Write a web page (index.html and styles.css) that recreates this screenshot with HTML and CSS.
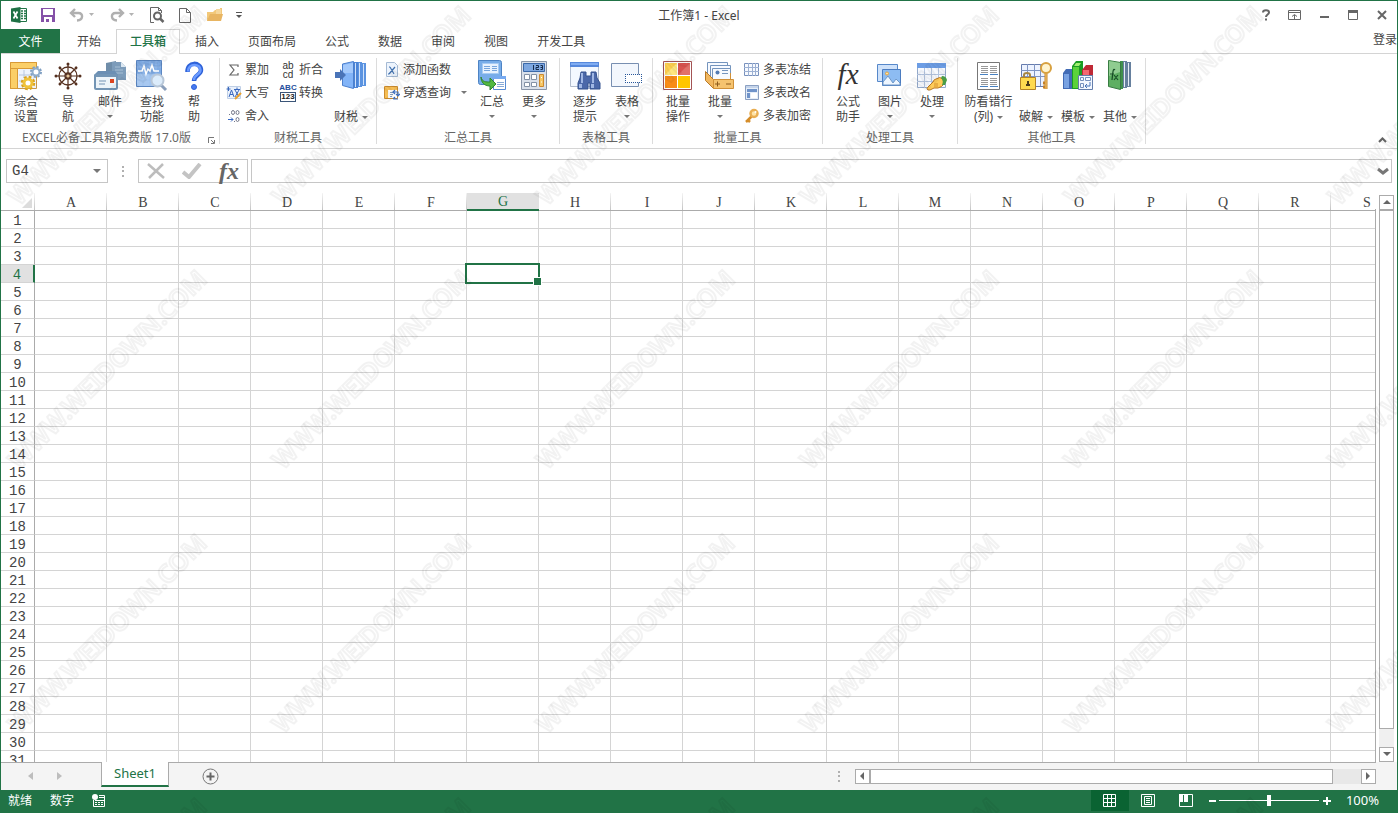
FILE: index.html
```html
<!DOCTYPE html>
<html lang="zh-CN">
<head>
<meta charset="utf-8">
<title>工作簿1 - Excel</title>
<link rel="stylesheet" href="styles.css">
</head>
<body>
<div class="app">
  <header class="titlebar">
    <div class="quick">
      <svg class="logo" width="18" height="16" viewBox="0 0 18 16"><path d="M8 1.500h7.500v13H8z" fill="#fff" stroke="#217346"/><path d="M10 4h2M13 4h2M10 6.500h2M13 6.500h2M10 9h2M13 9h2M10 11.500h2M13 11.500h2" stroke="#217346" stroke-width="1.500"/><path d="M0 1.500 9.500 0v16L0 14.500z" fill="#1e7145"/><path d="M2.500 4.500l4 7M6.500 4.500l-4 7" stroke="#fff" stroke-width="1.700"/></svg>
      <button class="qbtn save" aria-label="保存"><svg width="14" height="14" viewBox="0 0 14 14"><path d="M0 0h14v14H0z" fill="#8551a8"/><path d="M2 1h10v6H2zM3 9h8v5H3z" fill="#fff"/><path d="M5 11h3v3H5z" fill="#8551a8"/></svg></button>
      <button class="qbtn undo" aria-label="撤消"><svg width="26" height="14" viewBox="0 0 26 14"><path d="M6 1 2 5l4 4M2 5h7.500c5 0 5 7-1.500 7.500" fill="none" stroke="#b0b0b0" stroke-width="2.400"/><path d="M20 5h5l-2.500 3z" fill="#b3b3b3"/></svg></button>
      <button class="qbtn redo" aria-label="恢复"><svg width="26" height="14" viewBox="0 0 26 14"><path d="M10 1l4 4-4 4M14 5H6.500c-5 0-5 7 1.500 7.500" fill="none" stroke="#b0b0b0" stroke-width="2.400"/><path d="M20 5h5l-2.500 3z" fill="#b3b3b3"/></svg></button>
      <button class="qbtn preview" aria-label="打印预览"><svg width="15" height="16" viewBox="0 0 15 16"><path d="M4 15.500H.500V.500h8l3 3V6M8.500.500v3h3" fill="none" stroke="#666"/><circle cx="7.500" cy="9" r="3.500" fill="#fff" stroke="#666" stroke-width="2"/><path d="M10 11.500 13.500 15" stroke="#666" stroke-width="2.500"/></svg></button>
      <button class="qbtn new" aria-label="新建"><svg width="12" height="15" viewBox="0 0 12 15"><path d="M.500.500h7l4 4v10H.500zM7.500.500v4h4" fill="none" stroke="#666"/></svg></button>
      <button class="qbtn open" aria-label="打开"><svg width="17" height="14" viewBox="0 0 17 14"><path d="M0 13V4h6l2-2h5V0h2v8" fill="#f2c879"/><path d="M9 1h5v5H9z" fill="#f6d79b"/><path d="M3 6h13l-2 7H0z" fill="#e8b562"/></svg></button>
      <button class="qbtn more" aria-label="自定义快速访问工具栏"><svg width="6" height="7" viewBox="0 0 6 7"><path d="M0 .500h6" stroke="#555"/><path d="M0 3h6L3 6z" fill="#555"/></svg></button>
    </div>
    <h1 class="doc">工作簿1 - Excel</h1>
    <div class="winctl">
      <button aria-label="帮助"><svg width="12" height="12" viewBox="0 0 12 12"><path d="M3 3.500C3 .500 9 .500 9 3.500 9 5.500 6 5.500 6 8M6 9.500v2" fill="none" stroke="#666" stroke-width="2"/></svg></button>
      <button aria-label="功能区显示选项"><svg width="13" height="10" viewBox="0 0 13 10"><path d="M.500.500h12v9H.500zM0 2.500h13M6.500 9V5M4 6.500 6.500 4.500 9 6.500" fill="none" stroke="#666"/></svg></button>
      <button aria-label="最小化"><svg width="10" height="10" viewBox="0 0 10 10"><path d="M1 7h9" stroke="#666" stroke-width="2"/></svg></button>
      <button aria-label="最大化"><svg width="10" height="10" viewBox="0 0 10 10"><path d="M.500.500h9v9H.500z" fill="none" stroke="#666"/><path d="M0 1.500h10" stroke="#666" stroke-width="3"/></svg></button>
      <button aria-label="关闭"><svg width="10" height="10" viewBox="0 0 10 10"><path d="M1 1l8 8M9 1 1 9" stroke="#666" stroke-width="2"/></svg></button>
    </div>
  </header>

  <nav class="tabs">
    <button class="tab file">文件</button>
    <button class="tab">开始</button>
    <button class="tab active">工具箱</button>
    <button class="tab">插入</button>
    <button class="tab">页面布局</button>
    <button class="tab">公式</button>
    <button class="tab">数据</button>
    <button class="tab">审阅</button>
    <button class="tab">视图</button>
    <button class="tab">开发工具</button>
    <button class="login">登录</button>
  </nav>

  <section class="ribbon">
    <div class="group">
      <div class="tools">
        <button class="big"><svg width="32" height="32" viewBox="0 0 32 32"><path d="M.500 2.500h26v26H.500z" fill="#eef3fb" stroke="#c7974a"/><path d="M1 3h26v6H1zM1 9h6v20H1z" fill="#fbcf68"/><path d="M.500 2.500h26v6h-19v20h-7zM.500 8.500h7" fill="none" stroke="#d99a35"/><path d="M9 15h15M9 21h5M14 10v8" stroke="#b9c7de"/><circle cx="26" cy="12" r="5" fill="none" stroke="#7f9fc2" stroke-width="2" stroke-dasharray="2.200 1.700"/><circle cx="26" cy="12" r="3.500" fill="#fff" stroke="#8fadcb" stroke-width="2"/><circle cx="18" cy="23" r="6" fill="none" stroke="#d9a21c" stroke-width="2.500" stroke-dasharray="2.700 2"/><circle cx="18" cy="23" r="4" fill="#fff" stroke="#efc23a" stroke-width="3"/></svg><span>综合<br>设置</span></button>
        <button class="big"><svg width="32" height="32" viewBox="0 0 32 32"><g fill="none" stroke="#55301f"><circle cx="16" cy="16" r="9" stroke-width="1.300"/><circle cx="16" cy="16" r="3" stroke-width="1.300"/><path d="M16 3v26M3 16h26M7 7l18 18M25 7 7 25" stroke-width="1.200"/></g><g fill="#55301f"><circle cx="16" cy="4" r="1.500"/><circle cx="16" cy="28" r="1.500"/><circle cx="4" cy="16" r="1.500"/><circle cx="28" cy="16" r="1.500"/><circle cx="8" cy="8" r="1.400"/><circle cx="24" cy="8" r="1.400"/><circle cx="8" cy="24" r="1.400"/><circle cx="24" cy="24" r="1.400"/></g><circle cx="16" cy="16" r="1.500" fill="#e8c69a"/></svg><span>导<br>航</span></button>
        <button class="big"><svg width="32" height="32" viewBox="0 0 32 32"><path d="M12 3l10-2v13H12z" fill="#6f8da9"/><path d="M18 2h9l5 5v13H18z" fill="#7d9cba"/><path d="M27 2v5h5" fill="#dce8f2"/><path d="M21 7h5M21 10h8M21 13h8" stroke="#a9c0d5"/><path d="M4 11h17l3 4v4H0v-4z" fill="#6b8fb4"/><path d="M0 16q0-2 2-2h20q2 0 2 2v12q0 2-2 2H2q-2 0-2-2z" fill="#7395b5"/><path d="M2 17h20v11H2z" fill="#edf4f9"/><path d="M5 21h7M5 24h6" stroke="#9ab3ca" stroke-width="1.500"/><path d="M16 19h4v4h-4z" fill="#dd4520"/></svg><span>邮件</span><i class="caret"></i></button>
        <button class="big"><svg width="32" height="32" viewBox="0 0 32 32"><path d="M.500.500h25v26H.500z" fill="#7eaae3" stroke="#5c87c2"/><path d="M1 14h24v12H1z" fill="#a8c8f0"/><path d="M1 7h24M1 14h24M1 20h24M7 1v25M14 1v25M20 1v25" stroke="#9cc0ee" stroke-width=".700"/><path d="M2 11h4l2-5 2 8 2-5 2 2 2-6 2 6h5" fill="none" stroke="#fff" stroke-width="1.500"/><path d="m25 25 5 5" stroke="#8b9fbb" stroke-width="3"/><circle cx="21.500" cy="20.500" r="6" fill="#dcecfb" stroke="#b8c7d8" stroke-width="2"/></svg><span>查找<br>功能</span></button>
        <button class="big"><svg width="32" height="32" viewBox="0 0 32 32"><path d="M9.500 12C9 1 23 2 23 10c0 5-7 5-7 11" fill="none" stroke="#2e62d9" stroke-width="4.500"/><path d="M10 11.500C10 2.500 23 3.500 22.500 10c0 5-6.500 4-6.500 10" fill="none" stroke="#6b9bff" stroke-width="2.500"/><circle cx="16" cy="27" r="2.500" fill="#477af0" stroke="#2e62d9"/></svg><span>帮<br>助</span></button>
      </div>
      <div class="caption"><span>EXCEL必备工具箱免费版 17.0版</span><button class="launcher" aria-label="更多设置"><svg width="7" height="7" viewBox="0 0 7 7"><path d="M.500 6V.500H6M3 3l3 3M6.500 3v3.500H3" fill="none" stroke="#777"/></svg></button></div>
    </div>

    <div class="group">
      <div class="tools">
        <div class="stack">
          <button class="small"><svg width="16" height="16" viewBox="0 0 16 16"><path d="M12 5V3H4l4 5-4 5h8v-2" fill="none" stroke="#666" stroke-width="1.200"/></svg>累加</button>
          <button class="small"><svg width="16" height="16" viewBox="0 0 16 16"><path d="M1.500 1.500h13v12h-13z" fill="#eaf1fc" stroke="#c0d0e6"/><path d="M2.500 2v4M.500 4h4M3 12l2.500-7L8 12M4 9.500h3M8 4.500h6M11 2.500v2M9 5l4 7M13 5l-4 7" fill="none" stroke="#3a68bd"/><path d="m9 14 6-6" stroke="#eaa12c" stroke-width="2"/></svg>大写</button>
          <button class="small"><svg width="16" height="16" viewBox="0 0 16 16"><g fill="none" stroke="#75788a"><ellipse cx="7" cy="4.500" rx="1.500" ry="2"/><ellipse cx="11.500" cy="4.500" rx="1.500" ry="2"/><ellipse cx="11.500" cy="11.500" rx="1.500" ry="2"/><path d="M3 6.500h1M8 13.500h1"/></g><path d="M2 11.500h5M5 9.500l2 2-2 2" fill="none" stroke="#3768c4"/></svg>舍入</button>
        </div>
        <div class="stack second">
          <button class="small"><span class="letters"><b>ab</b><b>cd</b></span>折合</button>
          <button class="small"><span class="digits"><b>ABC</b><b class="num">123</b></span>转换</button>
        </div>
        <button class="big drop"><svg width="32" height="32" viewBox="0 0 32 32"><path d="M27 3h4v23h-4z" fill="#5b93e0"/><path d="M28 4h1v21h-1z" fill="#cfe2fb"/><path d="M23 2h4v25h-4z" fill="#5b93e0"/><path d="M24 3h1v23h-1z" fill="#cfe2fb"/><path d="M19 2h4v26h-4z" fill="#4b84d6"/><path d="M20 3h1v24h-1z" fill="#cfe2fb"/><path d="M7.500 4l11-2.500v27l-11-3z" fill="#82b4f8" stroke="#4c80ce"/><path d="M8 5l10-2v10H8z" fill="#a3c9fc"/><path d="M0 12h5V9l6 6-6 6v-3H0z" fill="#4a74b8"/></svg><span>财税<i class="caret"></i></span></button>
      </div>
      <div class="caption"><span>财税工具</span></div>
    </div>

    <div class="group">
      <div class="tools">
        <div class="stack wide">
          <button class="small"><svg width="16" height="16" viewBox="0 0 16 16"><path d="M2.500.500h8l3 3v11h-11z" fill="#edf4fd" stroke="#a5bad4"/><path d="m6 5 4 7M11 5l-6 7M4 12h1M5 5h1" stroke="#4272af" stroke-width="1.200"/></svg>添加函数</button>
          <button class="small"><svg width="16" height="16" viewBox="0 0 16 16"><path d="M.500 1.500h13v12H.500z" fill="#fff" stroke="#cc8c2f"/><path d="M1 2h12v3H1zM1 5h3v8H1z" fill="#f6bd53"/><path d="M6 7.500h4M6 9.500h3M6 11.500h2" stroke="#88a0c0"/><path d="M9 7h5v4M14 14H9M11 5 9 7l2 2M12 9l2 2 2-2M11 12l-2 2" fill="none" stroke="#3d6fbf" stroke-width="1.200"/></svg>穿透查询<i class="caret"></i></button>
        </div>
        <button class="big"><svg width="32" height="32" viewBox="0 0 32 32"><path d="M2.500.500h21q2 0 2 2v22h-21q-2 0-2-2z" fill="#78ade9" stroke="#4d83c4"/><path d="M6.500 3.500h16v10h-16z" fill="#e8f2fe" stroke="#a7caf3"/><path d="M8 6.500h6M16 6.500h5M8 8.500h6M16 8.500h5M8 10.500h6M16 10.500h5" stroke="#77a5dd"/><path d="M17.500 16.500h12v13h-12z" fill="#fff" stroke="#588cd3"/><path d="M17 16h13v3H17z" fill="#77aaf0"/><path d="M21 22.500h7M21 24.500h7M21 26.500h7" stroke="#88aad7"/><path d="M5 17c1 5 5 5 9 5v-4l6 6-6 6v-4C8 26 5 22 5 17z" fill="#52b842" stroke="#2f862d"/></svg><span>汇总</span><i class="caret"></i></button>
        <button class="big"><svg width="32" height="32" viewBox="0 0 32 32"><path d="M3.500 1.500h25v28h-25z" fill="#d9e0ea" stroke="#8995a8"/><path d="M5.500 3.500h21v8h-21z" fill="#7da7e0" stroke="#3b69a9"/><path d="M15.500 5v5M18 5.500h2.500v2H18v2h3M22.500 5.500h2v4h-2M22.500 7.500h2" fill="none" stroke="#162b4b"/><g fill="#fff" stroke="#8391a5"><path d="M6.500 14.500h5v5h-5zM13.500 14.500h5v5h-5zM6.500 22.500h5v4h-5zM13.500 22.500h5v4h-5z"/></g><path d="M21.500 14.500h4v12h-4z" fill="#f6c766" stroke="#cc8930"/><path d="M23 17.500h1M23 22h1" stroke="#fff"/></svg><span>更多</span><i class="caret"></i></button>
      </div>
      <div class="caption"><span>汇总工具</span></div>
    </div>

    <div class="group">
      <div class="tools">
        <button class="big"><svg width="32" height="32" viewBox="0 0 32 32"><path d="M1.500 2.500h28v24h-28z" fill="#f3f8ff" stroke="#b2bdce"/><path d="M1 2h29v5H1z" fill="#5688dc"/><path d="M2 3h27v2H2z" fill="#7facf2"/><path d="M12 12h5v4h5v-4h5l1 6 3 5v6H21v-6h-2v6H9v-6l2-5z" fill="#4b68a9" stroke="#35528f"/><path d="M12 13h2v10h-2zM23 13h2v10h-2zM10 24h3v4h-3zM22 24h3v4h-3z" fill="#a0b7e4"/></svg><span>逐步<br>提示</span></button>
        <button class="big"><svg width="32" height="32" viewBox="0 0 32 32"><path d="M.500 3.500h27v23H.500z" fill="#f3f7fd" stroke="#788fb1"/><path d="M14.500 14.500h16v8h-16z" fill="#fff"/><path d="M14 14.500h17M14 22.500h17M14.500 14v9M30.500 14v9" stroke="#27569a" stroke-dasharray="1 1"/></svg><span>表格</span><i class="caret"></i></button>
      </div>
      <div class="caption"><span>表格工具</span></div>
    </div>

    <div class="group">
      <div class="tools">
        <button class="big"><svg width="32" height="32" viewBox="0 0 32 32"><path d="M1.500 1.500h28v28h-28z" fill="#fff" stroke="#a35353"/><path d="M3 3h12v12H3z" fill="#ffd050"/><path d="M3 15 15 3v12z" fill="#ffe67e"/><path d="M16 3h12v12H16z" fill="#d9534f"/><path d="M16 15 28 3v12z" fill="#e2716a"/><path d="M3 16h12v12H3z" fill="#f98b16"/><path d="M16 16h12v12H16z" fill="#ffc600"/></svg><span>批量<br>操作</span></button>
        <button class="big"><svg width="32" height="32" viewBox="0 0 32 32"><g fill="#f7faff" stroke="#7494bd"><path d="M3.500 2.500h20v13h-20z"/><path d="M6.500 5.500h20v13h-20z"/><path d="M8.500 8.500h18v13h-18z"/></g><circle cx="13.500" cy="12.500" r="2" fill="#527bb4"/><path d="M18 10.500h6M18 13.500h6" stroke="#7595bf"/><path d="M1.500 11.500l8 8v9l-8-8z" fill="#f2b860" stroke="#b77927"/><path d="M9.500 19.500h20v9h-20zM26.500 13v6" fill="#f5c36f" stroke="#d09038"/><path d="M11 24h5M13.500 21.500v5M22 24h5" stroke="#8c5a1c"/></svg><span>批量</span><i class="caret"></i></button>
        <div class="stack tables">
          <button class="small"><svg width="16" height="16" viewBox="0 0 16 16"><path d="M.500 1.500h14v12H.500z" fill="#f7faff" stroke="#7891bd"/><path d="M4.500 1v13M8.500 1v13M11.500 1v13M0 5.500h15M0 9.500h15" stroke="#9db1d3"/></svg>多表冻结</button>
          <button class="small"><svg width="16" height="16" viewBox="0 0 16 16"><path d="M1.500.500h13v14h-13z" fill="#e5edf7" stroke="#8ba0c2"/><path d="M2 1h12v2H2z" fill="#c5d4ea"/><path d="M3 4h10v3H3zM3 8h3v5H3z" fill="#6f93c9"/><path d="M7 8h6v5H7z" fill="#fff"/></svg>多表改名</button>
          <button class="small"><svg width="16" height="16" viewBox="0 0 16 16"><path d="M8 8 2 14M4 12l2 2" stroke="#d58d29" stroke-width="2.500"/><circle cx="10" cy="5.500" r="3.500" fill="#ffe4a8" stroke="#e9ae52" stroke-width="2.500"/><circle cx="11.500" cy="4" r="1" fill="#fff"/></svg>多表加密</button>
        </div>
      </div>
      <div class="caption"><span>批量工具</span></div>
    </div>

    <div class="group">
      <div class="tools">
        <button class="big"><em class="fx">fx</em><span>公式<br>助手</span></button>
        <button class="big"><svg width="32" height="32" viewBox="0 0 32 32"><path d="M3.500 4.500h20v17h-20z" fill="#cfe2fa" stroke="#5688ca"/><path d="M8.500 9.500h18v16h-18z" fill="#8dbcf2" stroke="#4b7cc0"/><path d="M9 22l5-6 5 7 3-4 4 4v2H9z" fill="#eef6ff" stroke="#7098c7"/><circle cx="13" cy="13.500" r="1.500" fill="#ffe1a0" stroke="#e7a643"/></svg><span>图片</span><i class="caret"></i></button>
        <button class="big"><svg width="32" height="32" viewBox="0 0 32 32"><path d="M1.500 3.500h28v24h-28z" fill="#f6f9ff" stroke="#93a9ca"/><path d="M1 3h29v5H1z" fill="#6c9de5"/><path d="M8.500 8v20M15.500 8v20M22.500 8v20M1 14.500h28M1 21.500h28" stroke="#b3c4df"/><path d="M12 30q-2-1 0-3l5-5q1-3 3-3 4-3 7 0l1 5q-2 3-6 4h-4l-4 2z" fill="#ffcb59" stroke="#b97724"/><path d="M18 24h4M18 26h4" stroke="#d4922f"/><path d="M26 16q4 0 5 4l-2 5h-3q2-4-1-7z" fill="#4a9d45"/></svg><span>处理</span><i class="caret"></i></button>
      </div>
      <div class="caption"><span>处理工具</span></div>
    </div>

    <div class="group">
      <div class="tools">
        <button class="big broad"><svg width="32" height="32" viewBox="0 0 32 32"><path d="M4.500 2.500h22v27h-22z" fill="#fff" stroke="#777"/><path d="M8 6.500h7M17 6.500h7M8 8.500h7M17 8.500h7M8 10.500h7M17 10.500h7M8 12.500h7M17 12.500h7M8 18.500h7M17 18.500h7M8 20.500h7M17 20.500h7M8 22.500h7M17 22.500h7M8 24.500h7M17 24.500h7" stroke="#999"/><path d="M7 14.500h8M17 14.500h8M7 26.500h8M17 26.500h8" stroke="#4982c2"/></svg><span>防看错行<br>(列)<i class="caret"></i></span></button>
        <button class="big drop"><svg width="32" height="32" viewBox="0 0 32 32"><path d="M1.500 4.500h25v22h-25z" fill="#edf3ff" stroke="#667cae"/><path d="M7.500 4v22M14.500 4v22M20.500 4v22M1 10.500h25M1 16.500h25" stroke="#8095c2"/><path d="M26 13v16M27 23h-4M27 27h-4" stroke="#c68128" stroke-width="3"/><path d="M26 12v17" stroke="#f9cf75"/><circle cx="26" cy="8" r="5" fill="#fff4cf" stroke="#d8a140" stroke-width="2"/><path d="M4 19v-4q0-2 3-2t3 2v4" fill="none" stroke="#a78643" stroke-width="2"/><path d="M.500 17.500h15v12H.500z" fill="#ffda4f" stroke="#b58425"/><path d="M8 21v5M6 25h4" stroke="#4b3b1b" stroke-width="2"/></svg><span>破解<i class="caret"></i></span></button>
        <button class="big drop"><svg width="32" height="32" viewBox="0 0 32 32"><path d="M1 13l3-4h6v20H1z" fill="#426bb5"/><path d="M2 14h5v14H2z" fill="#79a2e2"/><path d="M10 6l4-5h7v28H10z" fill="#1b9c25"/><path d="M11 7h6v21h-6z" fill="#5bd23b"/><path d="M14 3h5l-2 3h-5z" fill="#a1ef70"/><path d="M20 10l4-5h7v23H20z" fill="#bf2936"/><path d="M21 10h6v17h-6z" fill="#f36770"/><path d="M16.500 15.500h14v14h-14z" fill="#f4f8ff" stroke="#647eac"/><path d="M18.500 17.500h3v3h-3zM23.500 17.500h5v3h-5zM18.500 23.500h3v4h-3z" fill="none" stroke="#7690bc"/><path d="M28 22v4h-5M25 24l-2 2 2 2" fill="none" stroke="#4672b6"/></svg><span>模板<i class="caret"></i></span></button>
        <button class="big drop"><svg width="32" height="32" viewBox="0 0 32 32"><path d="M23 2h4v25h-4z" fill="#66809e"/><path d="M24 3h1v23h-1z" fill="#e6edf5"/><path d="M19 1h4v27h-4z" fill="#66809e"/><path d="M20 2h1v25h-1z" fill="#e6edf5"/><path d="M16 1h3v28h-3z" fill="#3f8f4c"/><path d="M4.500.500l12 2v27l-12-3z" fill="#5eaf62" stroke="#387c42"/><path d="M5 1l11 2v9L5 16z" fill="#8fcc90"/><path d="M11 10c-2-2-2 1-3 10M6 14h4M10 15l4 5M14 15l-4 5" fill="none" stroke="#164c25" stroke-width="1.200"/></svg><span>其他<i class="caret"></i></span></button>
      </div>
      <div class="caption"><span>其他工具</span></div>
    </div>
    <button class="collapse" aria-label="折叠功能区"><svg width="9" height="6" viewBox="0 0 9 6"><path d="M1 5l3.500-3.500L8 5" fill="none" stroke="#666" stroke-width="2"/></svg></button>
  </section>

  <section class="formula">
    <div class="namebox"><input aria-label="名称框" value="G4"><button aria-label="选择名称"><svg width="8" height="5" viewBox="0 0 8 5"><path d="M0 0h8L4 4z" fill="#777"/></svg></button></div>
    <svg class="grip" width="2" height="11" viewBox="0 0 2 11"><path d="M0 0h2v2H0zM0 4h2v2H0zM0 9h2v2H0z" fill="#b0b0b0"/></svg>
    <div class="fbuttons">
      <button aria-label="取消"><svg width="18" height="16" viewBox="0 0 18 16"><path d="M1 1l16 14M16 1 2 15" stroke="#bdbdbd" stroke-width="2.500"/></svg></button>
      <button aria-label="输入"><svg width="20" height="16" viewBox="0 0 20 16"><path d="M1 9l6 5L18 1" fill="none" stroke="#c4c4c4" stroke-width="4"/></svg></button>
      <button class="insertfx" aria-label="插入函数"><em>fx</em></button>
    </div>
    <div class="fbar"><input aria-label="编辑栏"><button aria-label="展开编辑栏"><svg width="12" height="9" viewBox="0 0 12 9"><path d="M1 2l5 4 5-4" fill="none" stroke="#777" stroke-width="3"/></svg></button></div>
  </section>

  <main class="work">
    <div class="sheet" id="sheet"></div>
    <div class="vscroll">
      <button aria-label="向上滚动"><svg width="8" height="5" viewBox="0 0 8 5"><path d="M0 4h8L4 0z" fill="#666"/></svg></button>
      <div class="vthumb"></div>
      <div class="vtrack"></div>
      <button aria-label="向下滚动"><svg width="8" height="5" viewBox="0 0 8 5"><path d="M0 0h8L4 4z" fill="#666"/></svg></button>
    </div>
  </main>

  <div class="sheetbar">
    <button class="nav" aria-label="上一个"><svg width="5" height="8" viewBox="0 0 5 8"><path d="M5 0v8L0 4z" fill="#bdbdbd"/></svg></button>
    <button class="nav" aria-label="下一个"><svg width="5" height="8" viewBox="0 0 5 8"><path d="M0 0v8l5-4z" fill="#bdbdbd"/></svg></button>
    <button class="sheettab">Sheet1</button>
    <button class="add" aria-label="新工作表"><svg width="17" height="17" viewBox="0 0 17 17"><circle cx="8.500" cy="8.500" r="7.500" fill="none" stroke="#777"/><path d="M8.500 4.500v8M4.500 8.500h8" stroke="#666" stroke-width="2"/></svg></button>
    <svg class="grip push" width="2" height="11" viewBox="0 0 2 11"><path d="M0 0h2v2H0zM0 4h2v2H0zM0 9h2v2H0z" fill="#b0b0b0"/></svg>
    <div class="hscroll">
      <button aria-label="向左滚动"><svg width="5" height="8" viewBox="0 0 5 8"><path d="M4 0v8L0 4z" fill="#666"/></svg></button>
      <div class="hthumb"></div>
      <div class="htrack"></div>
      <button aria-label="向右滚动"><svg width="5" height="8" viewBox="0 0 5 8"><path d="M0 0v8l4-4z" fill="#666"/></svg></button>
    </div>
  </div>

  <footer class="status">
    <span>就绪</span><span>数字</span>
    <svg class="macro" width="13" height="13" viewBox="0 0 13 13"><path d="M1.500 6v6.500h11v-11H7" fill="none" stroke="#fff"/><circle cx="3" cy="3" r="3" fill="#fff"/><path d="M7 3.500h5M3 6.500h9" stroke="#fff"/><path d="M3 8.500h2M6 8.500h2M9 8.500h2M3 10.500h2M6 10.500h2M9 10.500h2" stroke="#fff"/></svg>
    <div class="views">
      <button class="view on" aria-label="普通"><svg width="13" height="13" viewBox="0 0 13 13"><path d="M.500.500h12v12H.500zM4.500 0v13M8.500 0v13M0 4.500h13M0 8.500h13" fill="none" stroke="#fff"/></svg></button>
      <button class="view" aria-label="页面布局"><svg width="14" height="13" viewBox="0 0 14 13"><path d="M.500.500h13v12H.500zM3.500 2.500h7v8h-7zM5 4.500h4M5 6.500h4M5 8.500h4" fill="none" stroke="#fff"/></svg></button>
      <button class="view" aria-label="分页预览"><svg width="14" height="13" viewBox="0 0 14 13"><path d="M.500.500h13v12H.500z" fill="none" stroke="#fff"/><path d="M0 0h4v8H0zM5 0h4v8H5z" fill="#fff"/></svg></button>
    </div>
    <button class="zoombtn" aria-label="缩小"><svg width="7" height="8" viewBox="0 0 7 8"><path d="M0 4h7" stroke="#fff" stroke-width="2"/></svg></button>
    <input class="zoomer" type="range" aria-label="缩放" min="0" max="100" value="50">
    <button class="zoombtn" aria-label="放大"><svg width="8" height="8" viewBox="0 0 8 8"><path d="M0 4h8M4 0v8" stroke="#fff" stroke-width="2"/></svg></button>
    <button class="percent">100%</button>
  </footer>

  <svg class="watermark" aria-hidden="true">
    <defs>
      <pattern id="mark" x="-24" y="-26" width="264" height="264" patternUnits="userSpaceOnUse">
        <text class="marktext" x="132" y="140" text-anchor="middle" transform="rotate(-45 132 132)">WWW.WEIDOWN.COM</text>
      </pattern>
    </defs>
    <rect width="100%" height="100%" fill="url(#mark)"/>
  </svg>
</div>
<script src="script.js"></script>
</body>
</html>
```

FILE: styles.css
```css
* { box-sizing: border-box; }
body {
  margin: 0;
  font: 12px/15px "Noto Sans", "Noto Sans CJK SC", sans-serif;
  color: #444;
  background: #fff;
}
button {
  font: inherit;
  color: inherit;
  background: none;
  border: 0;
  padding: 0;
  margin: 0;
  display: flex;
  align-items: center;
  justify-content: center;
}
input {
  font: inherit;
  color: inherit;
  border: 0;
  padding: 0;
  margin: 0;
  background: none;
  min-width: 0;
  outline: 0;
}
svg { display: block; flex: none; }

.app {
  position: relative;
  display: flex;
  flex-direction: column;
  height: 100vh;
  overflow: hidden;
  border: 1px solid #217346;
  border-bottom: 0;
}

/* title bar */
.titlebar {
  display: grid;
  grid-template-columns: 1fr auto 1fr;
  align-items: center;
  height: 28px;
}
.quick { display: flex; align-items: center; padding-left: 10px; }
.save { margin-left: 12px; }
.undo { margin-left: 14px; }
.redo { margin-left: 14px; }
.preview { margin-left: 15px; }
.new { margin-left: 14px; }
.open { margin-left: 16px; }
.more { margin-left: 12px; }
.doc { margin: 0; font-size: 12px; font-weight: 400; }
.winctl { display: flex; justify-content: flex-end; padding-right: 1px; }
.winctl button { width: 29px; height: 20px; }

/* ribbon tabs */
.tabs {
  display: flex;
  gap: 1px;
  height: 25px;
  flex: none;
  border-bottom: 1px solid #d4d4d4;
}
.tab { height: 24px; padding: 0 14px; white-space: nowrap; }
.file { width: 59px; margin-right: 2px; background: #217346; color: #fff; }
.active {
  height: 25px;
  background: #fff;
  border: 1px solid #d4d4d4;
  border-bottom: 0;
  padding: 0 13px 2px;
  color: #217346;
  font-weight: 500;
}
.login { margin-left: auto; height: 20px; white-space: nowrap; }

/* ribbon */
.ribbon {
  display: flex;
  flex: none;
  padding: 4px 0;
  height: 95px;
  border-bottom: 1px solid #d4d4d4;
}
.group {
  display: flex;
  flex-direction: column;
  justify-content: space-between;
  padding: 0 4px;
  border-right: 1px solid #dcdcdc;
}
.tools { display: flex; }
.big {
  flex-direction: column;
  justify-content: flex-start;
  width: 42px;
  height: 70px;
  padding-top: 2px;
  white-space: nowrap;
}
.big span { margin-top: 2px; text-align: center; }
.big > .caret { margin-top: 6px; }
.drop span { margin-top: 17px; }
.broad { width: 53px; }
.caret {
  display: inline-block;
  width: 0;
  height: 0;
  border: 3px solid transparent;
  border-top-color: #777;
  border-bottom: 0;
  vertical-align: 2px;
}
span > .caret { margin-left: 4px; }
.stack { display: flex; flex-direction: column; padding: 0 3px 0 2px; }
.small { justify-content: flex-start; height: 23px; gap: 3px; white-space: nowrap; }
.small .caret { margin-left: 7px; }
.second { padding: 0 7px 0 8px; }
.wide { padding: 0 4px 0 3px; }
.tables { padding: 0 7px 0 3px; }
.letters, .digits {
  display: flex;
  flex-direction: column;
  align-items: center;
  width: 16px;
}
.letters { font: 10px/9px "Liberation Sans", sans-serif; color: #333; }
.letters b { font-weight: 500; }
.digits { font: 700 8px/8px "Liberation Sans", sans-serif; color: #244f9c; }
.num { border: 1px solid #3b5578; color: #222; }
.caption {
  display: flex;
  justify-content: center;
  align-items: center;
  height: 14px;
  color: #666;
  white-space: nowrap;
}
.caption span { flex: 1; text-align: center; }
.launcher { align-self: flex-end; }
.fx {
  height: 32px;
  font: italic 29px/28px "Liberation Serif", serif;
  color: #333;
}
.collapse { margin-left: auto; margin-right: 10px; align-self: flex-end; height: 8px; }

/* formula bar */
.formula {
  display: flex;
  align-items: center;
  flex: none;
  height: 44px;
  padding: 0 5px;
}
.namebox, .fbuttons, .fbar { display: flex; height: 24px; border: 1px solid #c6c6c6; }
.namebox { width: 102px; padding: 0 6px 0 5px; }
.namebox input { flex: 1; font: 14px/22px "Liberation Mono", monospace; }
.grip { margin: 0 14px; }
.fbuttons { width: 110px; padding: 0 8px; justify-content: space-between; }
.insertfx { font: italic 700 24px/22px "Liberation Serif", serif; color: #666; }
.fbar { flex: 1; margin-left: 3px; padding-right: 2px; }
.fbar input { flex: 1; }

/* worksheet */
.work { display: flex; flex: 1; min-height: 0; background: #fff; }
.sheet {
  flex: 1;
  min-width: 0;
  overflow: hidden;
  border-right: 1px solid #ababab;
  border-image: linear-gradient(transparent 17px, #ababab 17px) 1;
}
.cells { width: max-content; table-layout: fixed; border-collapse: separate; border-spacing: 0; }
.cells th, .cells td {
  height: 18px;
  padding: 0;
  border-right: 1px solid #d4d4d4;
  border-bottom: 1px solid #d4d4d4;
}
.cells th { font: 14px/14px "Liberation Mono", monospace; text-align: center; }
.rowcol { width: 34px; }
.datacol { width: 72px; }
.cells thead th {
  padding-top: 2px;
  font-family: "Liberation Serif", serif;
  border-right: 0;
  border-bottom-color: #ababab;
  background: linear-gradient(#f4f4f4, #c4c4c4) right / 1px 100% no-repeat;
}
.cells tbody th { padding-top: 3px; border-right-color: #ababab; }
.cells thead .hot { background: #e1e1e1; color: #217346; border-bottom: 2px solid #217346; }
.cells tbody .hot { background: #e1e1e1; color: #217346; border-right: 2px solid #217346; }
.corner svg { margin: 0 3px 0 auto; }
.selected { position: relative; }
.cursor {
  position: absolute;
  inset: -2px;
  border: 2px solid #217346;
}
.cursor::after {
  content: "";
  position: absolute;
  right: -4px;
  bottom: -4px;
  width: 7px;
  height: 7px;
  background: #217346;
  border: 1px solid #fff;
}
.vscroll {
  display: flex;
  flex-direction: column;
  width: 21px;
  padding: 2px 3px 0;
}
.vscroll button { height: 15px; border: 1px solid #ababab; background: #fff; }
.vthumb { flex: 520; border: 1px solid #ababab; background: #fff; }
.vtrack { flex: 18; background: #f0f0f0; }

/* sheet tabs */
.sheetbar {
  display: flex;
  align-items: center;
  flex: none;
  height: 28px;
  padding-right: 21px;
  background: linear-gradient(#ababab, #ababab) left top / calc(100% - 21px) 1px no-repeat #f4f4f4;
}
.nav { width: 29px; height: 20px; }
.nav:first-child { margin-left: 15px; }
.sheettab {
  align-self: flex-start;
  height: 25px;
  padding: 0 12px;
  margin-left: 27px;
  font-size: 13px;
  color: #217346;
  background: #fff;
  border: 1px solid #ababab;
  border-top: 0;
  border-bottom: 2px solid #217346;
}
.add { margin-left: 33px; }
.push { margin-left: auto; margin-right: 15px; }
.hscroll { display: flex; width: 521px; height: 15px; }
.hscroll button { width: 15px; border: 1px solid #ababab; background: #fff; }
.hthumb { flex: 463; border: 1px solid #ababab; background: #fff; }
.htrack { flex: 28; background: #e8e8e8; }

/* status bar */
.status {
  display: flex;
  align-items: center;
  flex: none;
  height: 23px;
  padding: 0 18px 2px 7px;
  background: #217346;
  color: #fff;
}
.status span { margin-right: 18px; }
.views { display: flex; height: 21px; margin-left: auto; }
.view { width: 38px; }
.on { background: #0a6332; }
.zoombtn { margin: 0 3px 0 4px; }
.zoomer { appearance: none; width: 100px; height: 12px; background: linear-gradient(#fff, #fff) center / 100% 1px no-repeat; }
.zoomer::-webkit-slider-thumb { appearance: none; width: 4px; height: 11px; background: #fff; }
.percent { margin-left: 12px; font-size: 13px; }

.watermark {
  position: absolute;
  inset: -1px;
  width: calc(100% + 2px);
  height: calc(100% + 1px);
  pointer-events: none;
}
.marktext {
  font: 600 25px "Noto Sans", sans-serif;
  fill: none;
  stroke: #000;
  stroke-opacity: 0.05;
  stroke-width: 2px;
}
```

FILE: script.js
```js
const COL = 72, ROW = 18, HEAD = 34;
const ACTIVE = { row: 4, col: 7 };
const sheet = document.getElementById("sheet");

function element(tag, className, text) {
  const node = document.createElement(tag);
  if (className) node.className = className;
  if (text) node.textContent = text;
  return node;
}

function draw() {
  const cols = Math.min(26, Math.ceil((sheet.clientWidth - HEAD) / COL));
  const rows = Math.ceil(sheet.clientHeight / ROW) - 1;
  const table = element("table", "cells");
  const group = element("colgroup");
  group.append(element("col", "rowcol"));
  for (let c = 0; c < cols; c++) group.append(element("col", "datacol"));

  const head = element("thead");
  const top = element("tr");
  const corner = element("th", "corner");
  corner.innerHTML = '<svg width="10" height="10" viewBox="0 0 10 10"><path d="M10 0v10H0z" fill="#dcdcdc"/></svg>';
  top.append(corner);
  for (let c = 1; c <= cols; c++) {
    top.append(element("th", c === ACTIVE.col ? "hot" : "", String.fromCharCode(64 + c)));
  }
  head.append(top);

  const body = element("tbody");
  for (let r = 1; r <= rows; r++) {
    const line = element("tr");
    line.append(element("th", r === ACTIVE.row ? "hot" : "", String(r)));
    for (let c = 1; c <= cols; c++) {
      const cell = element("td");
      if (r === ACTIVE.row && c === ACTIVE.col) {
        cell.className = "selected";
        cell.append(element("div", "cursor"));
      }
      line.append(cell);
    }
    body.append(line);
  }
  table.append(group, head, body);
  sheet.replaceChildren(table);
}

draw();
window.addEventListener("resize", draw);
```
